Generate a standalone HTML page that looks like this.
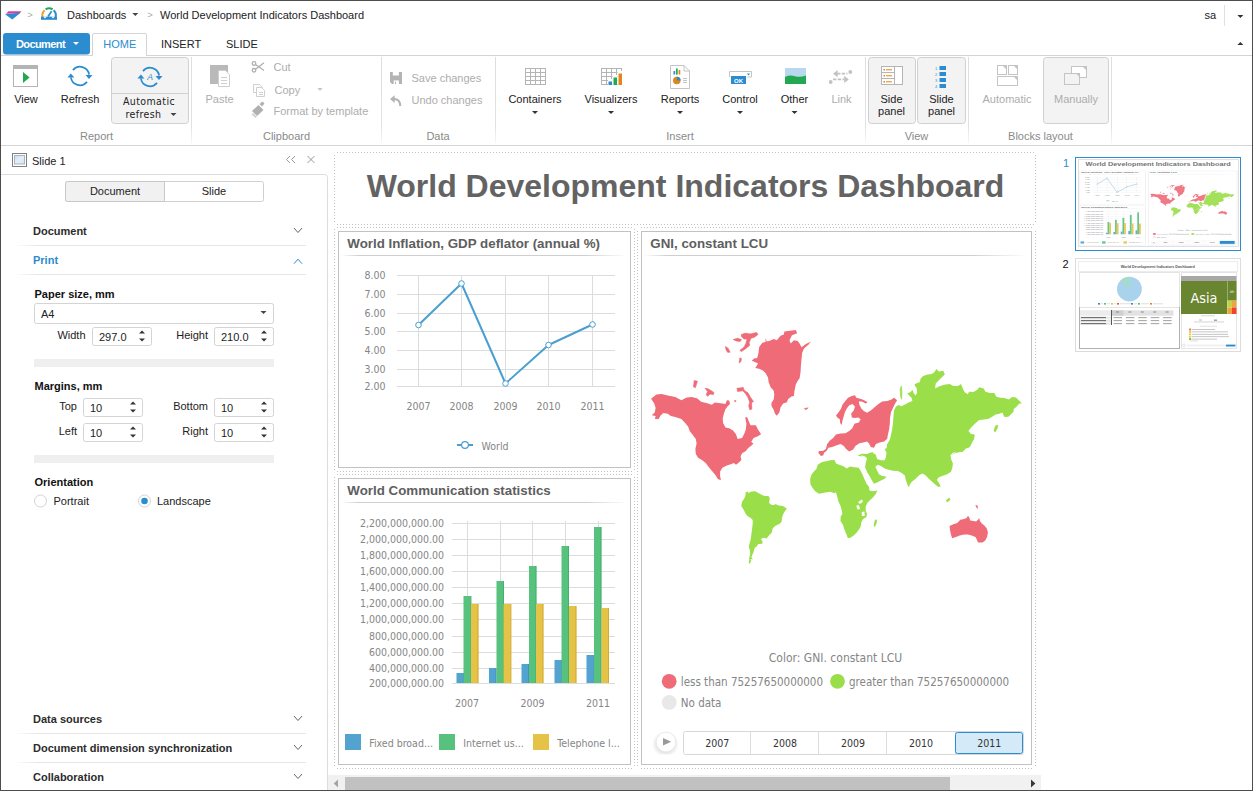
<!DOCTYPE html>
<html lang="en"><head><meta charset="utf-8"><title>World Development Indicators Dashboard</title>
<style>
html,body{margin:0;padding:0;background:#fff;overflow:hidden}
body{width:1253px;height:791px;font-family:"Liberation Sans",Arial,sans-serif;font-size:11px}
svg{display:block;position:absolute;left:0;top:0}
text{font-family:"Liberation Sans",Arial,sans-serif;white-space:pre}
text.t{font-family:"DejaVu Sans Condensed","DejaVu Sans","Liberation Sans",sans-serif;font-stretch:condensed}
</style></head><body>
<svg width="1253" height="791" viewBox="0 0 1253 791">
<path d="M8.5 11.2 L21.5 11.2 L19.5 13.2 L6 13.8 Z" fill="#e5389a"/>
<path d="M5 14.2 L20.8 12.6 L12.3 19.6 Z" fill="#2b8ccf"/>
<text x="27.5" y="17.8" font-size="9" fill="#a8a8a8" >&gt;</text>
<g fill="none" stroke-width="2"><path d="M42.6 17 A6.8 6.8 0 0 1 44.6 10.2" stroke="#f0a030"/><path d="M45.6 9.4 A6.8 6.8 0 0 1 52.6 9.4" stroke="#21a851"/><path d="M53.6 10.2 A6.8 6.8 0 0 1 55.6 17" stroke="#2b8ccf"/><path d="M48 16.5 L51.6 11.2" stroke="#2b8ccf" stroke-width="1.7"/></g>
<path d="M41 16.6 h16 v3.2 h-16 z" fill="#2b8ccf"/>
<path d="M43.2 16.4 h3.6 l-1.8 2 z M51.2 16.4 h3.6 l-1.8 2 z" fill="#fff"/>
<text x="67" y="18.5" font-size="11" fill="#222" >Dashboards</text>
<path d="M132.3 13 h6 l-3 3 z" fill="#444"/>
<text x="147.6" y="17.8" font-size="9" fill="#a8a8a8" >&gt;</text>
<text x="160" y="18.5" font-size="11" fill="#222" >World Development Indicators Dashboard</text>
<text x="1204.5" y="19" font-size="11" fill="#222" >sa</text>
<rect x="1224" y="5" width="1" height="21" fill="#e0e0e0" />
<path d="M1237.4 15 h6 l-3 3 z" fill="#333"/>
<path d="M1237.4 45 h6 l-3 -3 z" fill="#333"/>
<rect x="1" y="55" width="1251" height="1" fill="#d4d4d4" />
<rect x="3" y="33" width="87" height="21.5" fill="#2b8ccf" rx="3" />
<text x="16" y="47.5" font-size="11" fill="#fff" font-weight="bold" letter-spacing="-0.6">Document</text>
<path d="M73 42 h6 l-3 3 z" fill="#fff"/>
<path d="M92.5 56 V35 a1.5 1.5 0 0 1 1.5 -1.5 H145 a1.5 1.5 0 0 1 1.5 1.5 V56" fill="#fff" stroke="#d4d4d4"/>
<rect x="93" y="55" width="53" height="1" fill="#fff" />
<text x="103.3" y="48" font-size="11" fill="#2b8ccf" >HOME</text>
<text x="161" y="48" font-size="11" fill="#222" >INSERT</text>
<text x="226" y="48" font-size="11" fill="#222" >SLIDE</text>
<rect x="1" y="145" width="1251" height="1" fill="#d4d4d4" />
<defs><linearGradient id="sepg" x1="0" y1="0" x2="0" y2="1"><stop offset="0" stop-color="#dedede"/><stop offset="0.8" stop-color="#e2e2e2"/><stop offset="1" stop-color="#f6f6f6"/></linearGradient><linearGradient id="ulg" x1="0" y1="0" x2="1" y2="0"><stop offset="0" stop-color="#d0d0d0" stop-opacity="0"/><stop offset="0.06" stop-color="#cfcfcf"/><stop offset="0.85" stop-color="#cfcfcf"/><stop offset="1" stop-color="#d0d0d0" stop-opacity="0"/></linearGradient></defs>
<rect x="191" y="57" width="1" height="86" fill="url(#sepg)"/>
<rect x="381" y="57" width="1" height="86" fill="url(#sepg)"/>
<rect x="495" y="57" width="1" height="86" fill="url(#sepg)"/>
<rect x="865" y="57" width="1" height="86" fill="url(#sepg)"/>
<rect x="968" y="57" width="1" height="86" fill="url(#sepg)"/>
<rect x="1111" y="57" width="1" height="86" fill="url(#sepg)"/>
<rect x="13.5" y="65.5" width="24" height="21" fill="#fff" stroke="#b4b4b4" stroke-width="1" />
<rect x="13" y="65" width="25" height="4" fill="#b4b4b4" />
<path d="M23 72 L29.6 77.5 L23 83 Z" fill="#21a851"/>
<text x="26" y="102.5" font-size="11" fill="#222" text-anchor="middle" >View</text>
<g fill="none" stroke="#2b8ccf" stroke-width="1.7"><path d="M72.95 70.09 A9.2 9.2 0 0 1 89.11 74.72"/><path d="M87.05 81.91 A9.2 9.2 0 0 1 70.89 77.28"/></g>
<path d="M85.5 75.1 h7 l-3.5 4 z" fill="#2b8ccf"/>
<path d="M67.4 77.5 h7 l-3.5 -4 z" fill="#2b8ccf"/>
<text x="80" y="102.5" font-size="11" fill="#222" text-anchor="middle" >Refresh</text>
<rect x="111.5" y="57.5" width="77" height="66" fill="#f3f3f3" stroke="#d0d0d0" stroke-width="1" rx="3" />
<rect x="112" y="93" width="76" height="1" fill="#d0d0d0" />
<g fill="none" stroke="#2b8ccf" stroke-width="1.7"><path d="M142.95 71.09 A9.2 9.2 0 0 1 159.11 75.72"/><path d="M157.05 82.91 A9.2 9.2 0 0 1 140.89 78.28"/></g>
<path d="M155.5 76.1 h7 l-3.5 4 z" fill="#2b8ccf"/>
<path d="M137.4 78.5 h7 l-3.5 -4 z" fill="#2b8ccf"/>
<text x="150" y="80" font-size="8.5" fill="#2b8ccf" text-anchor="middle" font-style="italic">A</text>
<text x="149" y="105" font-size="10.5" fill="#222" text-anchor="middle" class="t" letter-spacing="0.4">Automatic</text>
<text x="143.5" y="117.5" font-size="10.5" fill="#222" text-anchor="middle" class="t" letter-spacing="0.4">refresh</text>
<path d="M170.5 113 h6 l-3 3 z" fill="#444"/>
<text x="96.5" y="139.5" font-size="11" fill="#8a8a8a" text-anchor="middle" >Report</text>
<rect x="210" y="65" width="18" height="19" fill="#b9b9b9" />
<path d="M218.5 70.5 h7 l4 4 v12 h-11 z" fill="#fff" stroke="#cfcfcf"/>
<rect x="221" y="77" width="6" height="1" fill="#cfcfcf" />
<rect x="221" y="80" width="6" height="1" fill="#cfcfcf" />
<rect x="221" y="83" width="6" height="1" fill="#cfcfcf" />
<text x="219.5" y="102.5" font-size="11" fill="#adadad" text-anchor="middle" >Paste</text>
<g fill="none" stroke="#b0b0b0" stroke-width="1.3"><circle cx="254" cy="63.5" r="1.8"/><circle cx="254" cy="70.3" r="1.8"/><path d="M255.5 64.5 L264 70.5 M255.5 69.3 L264 62.8"/></g>
<text x="273.5" y="71" font-size="11" fill="#adadad" >Cut</text>
<g fill="#fff" stroke="#cfcfcf"><path d="M253.5 84.5 h6 l3 3 v5 h-9 z"/><path d="M256.5 87.5 h5 l3 3 v6 h-8 z"/></g>
<rect x="259" y="92" width="4" height="1" fill="#cfcfcf" />
<rect x="259" y="94" width="4" height="1" fill="#cfcfcf" />
<text x="274.5" y="94" font-size="11" fill="#adadad" >Copy</text>
<path d="M317.5 88 h5 l-2.5 3 z" fill="#c4c4c4"/>
<path d="M252 111 l6.5 -6 l5 5 l-6.5 6 z" fill="#b0b0b0"/><path d="M259.5 104 l3 -2.5 l2 2 l-2.5 3 z" fill="#b0b0b0"/><path d="M253 113 l4 4 l-1.5 1 l-4 -3.5z" fill="#d0d0d0"/>
<text x="273.5" y="115" font-size="11" fill="#adadad" >Format by template</text>
<text x="286.5" y="139.5" font-size="11" fill="#8a8a8a" text-anchor="middle" >Clipboard</text>
<path d="M390 72 h12 v12 h-10 l-2 -2 z" fill="#b4b4b4"/>
<rect x="392.8" y="72" width="6.1" height="3.5" fill="#fff" />
<rect x="393.7" y="80.4" width="5.2" height="3.6" fill="#fff" />
<rect x="395" y="81.6" width="1" height="2.4" fill="#b4b4b4" />
<text x="411.5" y="81.5" font-size="11" fill="#adadad" >Save changes</text>
<path d="M390 99 L394.7 95.2 V102.9 Z" fill="#b4b4b4"/><path d="M394 99 Q400.2 99 400.2 106" fill="none" stroke="#b4b4b4" stroke-width="2"/>
<text x="411.5" y="104" font-size="11" fill="#adadad" >Undo changes</text>
<text x="438" y="139.5" font-size="11" fill="#8a8a8a" text-anchor="middle" >Data</text>
<rect x="525" y="68" width="1" height="17" fill="#b4b4b4" />
<rect x="530" y="68" width="1" height="17" fill="#b4b4b4" />
<rect x="535" y="68" width="1" height="17" fill="#b4b4b4" />
<rect x="540" y="68" width="1" height="17" fill="#b4b4b4" />
<rect x="545" y="68" width="1" height="17" fill="#b4b4b4" />
<rect x="525" y="68" width="21" height="1" fill="#b4b4b4" />
<rect x="525" y="72" width="21" height="1" fill="#b4b4b4" />
<rect x="525" y="76" width="21" height="1" fill="#b4b4b4" />
<rect x="525" y="80" width="21" height="1" fill="#b4b4b4" />
<rect x="525" y="84" width="21" height="1" fill="#b4b4b4" />
<text x="535" y="102.5" font-size="11" fill="#222" text-anchor="middle" >Containers</text>
<path d="M532 111 h6 l-3 3 z" fill="#333"/>
<rect x="601" y="68" width="1" height="17" fill="#b4b4b4" />
<rect x="606" y="68" width="1" height="17" fill="#b4b4b4" />
<rect x="611" y="68" width="1" height="17" fill="#b4b4b4" />
<rect x="616" y="68" width="1" height="17" fill="#b4b4b4" />
<rect x="621" y="68" width="1" height="17" fill="#b4b4b4" />
<rect x="601" y="68" width="21" height="1" fill="#b4b4b4" />
<rect x="601" y="72" width="21" height="1" fill="#b4b4b4" />
<rect x="601" y="76" width="21" height="1" fill="#b4b4b4" />
<rect x="601" y="80" width="21" height="1" fill="#b4b4b4" />
<rect x="601" y="84" width="21" height="1" fill="#b4b4b4" />
<rect x="608" y="79" width="4.5" height="6" fill="#fff" />
<rect x="608.5" y="81.5" width="3.5" height="3.5" fill="#2b8ccf" />
<rect x="612.5" y="75" width="4.5" height="10" fill="#fff" />
<rect x="613.5" y="77.5" width="3.5" height="7.5" fill="#21a851" />
<rect x="617.5" y="71" width="5" height="14" fill="#fff" />
<rect x="618.5" y="73.5" width="3.5" height="11.5" fill="#e0861a" />
<text x="611" y="102.5" font-size="11" fill="#222" text-anchor="middle" >Visualizers</text>
<path d="M608 111 h6 l-3 3 z" fill="#333"/>
<path d="M670.5 65.5 h13.5 l5.5 5.5 v17.5 h-19 z" fill="#fff" stroke="#c4c4c4"/><path d="M684 65.5 v5.5 h5.5" fill="none" stroke="#c4c4c4"/>
<rect x="673.5" y="71" width="1.7" height="3.5" fill="#2b8ccf" />
<rect x="676" y="68.5" width="1.7" height="6" fill="#21a851" />
<rect x="678.6" y="70" width="1.7" height="4.5" fill="#e0861a" />
<circle cx="676.8" cy="80.5" r="3.8" fill="#e0861a"/><path d="M676.8 80.5 v-3.8 a3.8 3.8 0 0 1 3.8 3.8 z" fill="#2b8ccf"/>
<rect x="683" y="78" width="4" height="1" fill="#c4c4c4" />
<rect x="683" y="80" width="4" height="1" fill="#c4c4c4" />
<rect x="683" y="82" width="4" height="1" fill="#c4c4c4" />
<text x="680" y="102.5" font-size="11" fill="#222" text-anchor="middle" >Reports</text>
<path d="M677 111 h6 l-3 3 z" fill="#333"/>
<path d="M729.5 77 v-5.5 h22 v5.5 h-4" fill="none" stroke="#c4c4c4"/>
<rect x="731" y="76" width="15" height="8" fill="#2b8ccf" />
<text x="738.5" y="82.5" font-size="6" fill="#fff" text-anchor="middle" font-weight="bold" >OK</text>
<path d="M747 73.5 h3 l-1.5 2 z" fill="#2b8ccf"/>
<text x="740" y="102.5" font-size="11" fill="#222" text-anchor="middle" >Control</text>
<path d="M737 111 h6 l-3 3 z" fill="#333"/>
<rect x="785" y="68" width="21" height="9" fill="#b9d8ee" />
<path d="M785 77 q5 -2.5 10 -0.8 q5 1.6 11 -0.8 v8.6 h-21 z" fill="#21a851"/>
<text x="794.5" y="102.5" font-size="11" fill="#222" text-anchor="middle" >Other</text>
<path d="M791.5 111 h6 l-3 3 z" fill="#333"/>
<g fill="#c2c2c2"><circle cx="830.7" cy="82" r="1.9"/><circle cx="850.3" cy="72" r="1.9"/></g><g stroke="#c2c2c2" stroke-width="1.8" fill="none" stroke-dasharray="3.4 1.3"><path d="M837 73.7 h10.5"/><path d="M833 79.4 h11"/></g><path d="M833 73.7 l4.6 -3.6 v7.2 z M848.8 79.4 l-4.6 -3.6 v7.2 z" fill="#c2c2c2"/>
<text x="841.5" y="102.5" font-size="11" fill="#adadad" text-anchor="middle" >Link</text>
<text x="680" y="139.5" font-size="11" fill="#8a8a8a" text-anchor="middle" >Insert</text>
<rect x="868.5" y="57.5" width="47" height="66" fill="#f3f3f3" stroke="#d0d0d0" stroke-width="1" rx="3" />
<rect x="917.5" y="57.5" width="48" height="66" fill="#f3f3f3" stroke="#d0d0d0" stroke-width="1" rx="3" />
<rect x="881.5" y="66.5" width="21" height="18" fill="#fff" stroke="#b4b4b4" stroke-width="1" />
<rect x="894" y="67" width="1" height="17" fill="#b4b4b4" />
<rect x="882" y="72" width="12" height="1" fill="#b4b4b4" />
<rect x="882" y="78" width="12" height="1" fill="#b4b4b4" />
<rect x="883.5" y="69" width="1.5" height="1.5" fill="#e0861a" />
<rect x="886" y="69.3" width="6" height="1" fill="#e0861a" />
<rect x="883.5" y="75" width="1.5" height="1.5" fill="#e0861a" />
<rect x="886" y="75.3" width="6" height="1" fill="#e0861a" />
<rect x="883.5" y="81" width="1.5" height="1.5" fill="#e0861a" />
<rect x="886" y="81.3" width="6" height="1" fill="#e0861a" />
<text x="891.5" y="102.5" font-size="11" fill="#222" text-anchor="middle" >Side</text>
<text x="891.5" y="114.5" font-size="11" fill="#222" text-anchor="middle" >panel</text>
<rect x="939.5" y="66" width="6.5" height="4" fill="#2b8ccf" />
<text x="936" y="70" font-size="4" fill="#2b8ccf" text-anchor="middle" >1</text>
<rect x="939.5" y="72" width="6.5" height="4" fill="#2b8ccf" />
<text x="936" y="76" font-size="4" fill="#2b8ccf" text-anchor="middle" >2</text>
<rect x="939.5" y="78" width="6.5" height="4" fill="#2b8ccf" />
<text x="936" y="82" font-size="4" fill="#2b8ccf" text-anchor="middle" >3</text>
<rect x="939.5" y="84" width="6.5" height="4" fill="#2b8ccf" />
<text x="936" y="88" font-size="4" fill="#2b8ccf" text-anchor="middle" >4</text>
<text x="941.5" y="102.5" font-size="11" fill="#222" text-anchor="middle" >Slide</text>
<text x="941.5" y="114.5" font-size="11" fill="#222" text-anchor="middle" >panel</text>
<text x="916.5" y="139.5" font-size="11" fill="#8a8a8a" text-anchor="middle" >View</text>
<rect x="997.5" y="65.5" width="9" height="9" fill="#fff" stroke="#c4c4c4" stroke-width="1" />
<path d="M1002.5 65.5 h4 v4 z" fill="#c4c4c4"/>
<rect x="1008.5" y="65.5" width="9" height="9" fill="#fff" stroke="#c4c4c4" stroke-width="1" />
<path d="M1013.5 65.5 h4 v4 z" fill="#c4c4c4"/>
<rect x="997.5" y="76.5" width="20" height="9" fill="#fff" stroke="#c4c4c4" stroke-width="1" />
<path d="M1013.5 76.5 h4 v4 z" fill="#c4c4c4"/>
<text x="1007" y="102.5" font-size="11" fill="#adadad" text-anchor="middle" >Automatic</text>
<rect x="1043.5" y="57.5" width="65" height="66" fill="#f3f3f3" stroke="#d0d0d0" stroke-width="1" rx="3" />
<rect x="1071.5" y="66.5" width="15" height="11" fill="#fff" stroke="#c4c4c4" stroke-width="1" />
<path d="M1082.5 66.5 h4 v4 z" fill="#c4c4c4"/>
<rect x="1064.5" y="73.5" width="15" height="11" fill="#f3f3f3" stroke="#c4c4c4"/><path d="M1076 73.5 h4 v4 z" fill="#c4c4c4"/>
<text x="1076" y="102.5" font-size="11" fill="#adadad" text-anchor="middle" >Manually</text>
<text x="1040.5" y="139.5" font-size="11" fill="#8a8a8a" text-anchor="middle" >Blocks layout</text>
<rect x="12.5" y="153.5" width="14" height="13" fill="#fff" stroke="#808080" stroke-width="1" />
<defs><linearGradient id="slg" x1="0" y1="0" x2="1" y2="1"><stop offset="0" stop-color="#c6dcf0"/><stop offset="0.5" stop-color="#e4eff9"/><stop offset="1" stop-color="#cfe2f3"/></linearGradient></defs>
<rect x="14.5" y="155.5" width="10" height="8.5" fill="url(#slg)" stroke="#a8b4c0" stroke-width="1" />
<text x="32" y="165" font-size="11" fill="#222" >Slide 1</text>
<g fill="none" stroke="#9a9a9a" stroke-width="1"><path d="M290 156 l-3.5 3.5 l3.5 3.5 M295 156 l-3.5 3.5 l3.5 3.5"/><path d="M307.5 156 l7 7 M314.5 156 l-7 7"/></g>
<path d="M1 174.5 H324.5 a3 3 0 0 1 3 3 V790" fill="none" stroke="#dcdcdc"/>
<rect x="65.5" y="181.5" width="198" height="20" fill="#fff" stroke="#d0d0d0" stroke-width="1" rx="2" />
<path d="M67.5 181.5 H164.5 V201.5 H67.5 a2 2 0 0 1 -2 -2 V183.5 a2 2 0 0 1 2 -2 z" fill="#f1f1f1" stroke="#c8c8c8"/>
<text x="115" y="195" font-size="11" fill="#222" text-anchor="middle" >Document</text>
<text x="214" y="195" font-size="11" fill="#222" text-anchor="middle" >Slide</text>
<defs><linearGradient id="secl" x1="0" y1="0" x2="1" y2="0"><stop offset="0" stop-color="#e6e6e6" stop-opacity="0"/><stop offset="0.08" stop-color="#e6e6e6"/><stop offset="1" stop-color="#e6e6e6"/></linearGradient></defs>
<text x="33" y="234.5" font-size="11" fill="#2c2c2c" font-weight="bold" >Document</text>
<path d="M294 228 l4 4.5 l4 -4.5" fill="none" stroke="#666" stroke-width="1"/>
<rect x="14" y="245" width="292" height="1" fill="url(#secl)"/>
<text x="33" y="263.5" font-size="11" fill="#2b8ccf" font-weight="bold" >Print</text>
<path d="M294 263.7 l4 -4.5 l4 4.5" fill="none" stroke="#2b8ccf" stroke-width="1"/>
<rect x="14" y="274" width="292" height="1" fill="url(#secl)"/>
<text x="34.5" y="298" font-size="11" fill="#111" font-weight="bold" >Paper size, mm</text>
<rect x="34.5" y="303.5" width="239" height="20" fill="#fff" stroke="#d4d4d4" stroke-width="1" rx="2" />
<text x="41" y="317.5" font-size="11" fill="#222" >A4</text>
<path d="M260.5 311 h6 l-3 3 z" fill="#444"/>
<text x="85.5" y="339" font-size="11" fill="#222" text-anchor="end" >Width</text>
<rect x="92.5" y="327.5" width="59" height="18" fill="#fff" stroke="#d4d4d4" stroke-width="1" rx="2" />
<text x="99" y="340.5" font-size="11" fill="#222" >297.0</text>
<path d="M139 333.5 h6 l-3 -3 z" fill="#333"/>
<path d="M139 338.5 h6 l-3 3 z" fill="#333"/>
<text x="208" y="339" font-size="11" fill="#222" text-anchor="end" >Height</text>
<rect x="214.5" y="327.5" width="59" height="18" fill="#fff" stroke="#d4d4d4" stroke-width="1" rx="2" />
<text x="221" y="340.5" font-size="11" fill="#222" >210.0</text>
<path d="M261 333.5 h6 l-3 -3 z" fill="#333"/>
<path d="M261 338.5 h6 l-3 3 z" fill="#333"/>
<rect x="34" y="359" width="240" height="8" fill="#efefef" />
<text x="34.5" y="390" font-size="11" fill="#111" font-weight="bold" >Margins, mm</text>
<text x="77" y="410" font-size="11" fill="#222" text-anchor="end" >Top</text>
<rect x="83.5" y="398.5" width="59" height="18" fill="#fff" stroke="#d4d4d4" stroke-width="1" rx="2" />
<text x="90" y="411.5" font-size="11" fill="#222" >10</text>
<path d="M130 404.5 h6 l-3 -3 z" fill="#333"/>
<path d="M130 409.5 h6 l-3 3 z" fill="#333"/>
<text x="208" y="410" font-size="11" fill="#222" text-anchor="end" >Bottom</text>
<rect x="214.5" y="398.5" width="59" height="18" fill="#fff" stroke="#d4d4d4" stroke-width="1" rx="2" />
<text x="221" y="411.5" font-size="11" fill="#222" >10</text>
<path d="M261 404.5 h6 l-3 -3 z" fill="#333"/>
<path d="M261 409.5 h6 l-3 3 z" fill="#333"/>
<text x="77" y="435" font-size="11" fill="#222" text-anchor="end" >Left</text>
<rect x="83.5" y="423.5" width="59" height="18" fill="#fff" stroke="#d4d4d4" stroke-width="1" rx="2" />
<text x="90" y="436.5" font-size="11" fill="#222" >10</text>
<path d="M130 429.5 h6 l-3 -3 z" fill="#333"/>
<path d="M130 434.5 h6 l-3 3 z" fill="#333"/>
<text x="208" y="435" font-size="11" fill="#222" text-anchor="end" >Right</text>
<rect x="214.5" y="423.5" width="59" height="18" fill="#fff" stroke="#d4d4d4" stroke-width="1" rx="2" />
<text x="221" y="436.5" font-size="11" fill="#222" >10</text>
<path d="M261 429.5 h6 l-3 -3 z" fill="#333"/>
<path d="M261 434.5 h6 l-3 3 z" fill="#333"/>
<rect x="34" y="455" width="240" height="8" fill="#efefef" />
<text x="34.5" y="485.5" font-size="11" fill="#111" font-weight="bold" >Orientation</text>
<circle cx="40.5" cy="501" r="6" fill="#fff" stroke="#d4d4d4"/>
<text x="53.5" y="505" font-size="11" fill="#222" >Portrait</text>
<circle cx="144.5" cy="501" r="6" fill="#fff" stroke="#d4d4d4"/><circle cx="144.5" cy="501" r="3.3" fill="#2b8ccf"/>
<text x="157" y="505" font-size="11" fill="#222" >Landscape</text>
<text x="33" y="722.5" font-size="11" fill="#2c2c2c" font-weight="bold" >Data sources</text>
<path d="M294 716 l4 4.5 l4 -4.5" fill="none" stroke="#666" stroke-width="1"/>
<rect x="14" y="733" width="292" height="1" fill="url(#secl)"/>
<text x="33" y="751.5" font-size="11" fill="#2c2c2c" font-weight="bold" >Document dimension synchronization</text>
<path d="M294 745 l4 4.5 l4 -4.5" fill="none" stroke="#666" stroke-width="1"/>
<rect x="14" y="762" width="292" height="1" fill="url(#secl)"/>
<text x="33" y="780.5" font-size="11" fill="#2c2c2c" font-weight="bold" >Collaboration</text>
<path d="M294 774 l4 4.5 l4 -4.5" fill="none" stroke="#666" stroke-width="1"/>
<line x1="337" y1="152.5" x2="1034" y2="152.5" stroke="#c2c2c2" stroke-dasharray="1 2" shape-rendering="crispEdges"/>
<line x1="334.5" y1="155" x2="334.5" y2="223" stroke="#c2c2c2" stroke-dasharray="1 2" shape-rendering="crispEdges"/>
<line x1="1035.5" y1="155" x2="1035.5" y2="223" stroke="#c2c2c2" stroke-dasharray="1 2" shape-rendering="crispEdges"/>
<line x1="337" y1="224.5" x2="1034" y2="224.5" stroke="#c2c2c2" stroke-dasharray="1 2" shape-rendering="crispEdges"/>
<line x1="337" y1="227.5" x2="632" y2="227.5" stroke="#c2c2c2" stroke-dasharray="1 2" shape-rendering="crispEdges"/>
<line x1="641" y1="227.5" x2="1034" y2="227.5" stroke="#c2c2c2" stroke-dasharray="1 2" shape-rendering="crispEdges"/>
<line x1="334.5" y1="229" x2="334.5" y2="470" stroke="#c2c2c2" stroke-dasharray="1 2" shape-rendering="crispEdges"/>
<line x1="334.5" y1="477" x2="334.5" y2="766" stroke="#c2c2c2" stroke-dasharray="1 2" shape-rendering="crispEdges"/>
<line x1="634.5" y1="229" x2="634.5" y2="470" stroke="#c2c2c2" stroke-dasharray="1 2" shape-rendering="crispEdges"/>
<line x1="634.5" y1="477" x2="634.5" y2="766" stroke="#c2c2c2" stroke-dasharray="1 2" shape-rendering="crispEdges"/>
<line x1="637.5" y1="231" x2="637.5" y2="766" stroke="#c2c2c2" stroke-dasharray="1 2" shape-rendering="crispEdges"/>
<line x1="1035.5" y1="231" x2="1035.5" y2="766" stroke="#c2c2c2" stroke-dasharray="1 2" shape-rendering="crispEdges"/>
<line x1="337" y1="471.5" x2="632" y2="471.5" stroke="#c2c2c2" stroke-dasharray="1 2" shape-rendering="crispEdges"/>
<line x1="337" y1="474.5" x2="632" y2="474.5" stroke="#c2c2c2" stroke-dasharray="1 2" shape-rendering="crispEdges"/>
<line x1="337" y1="768.5" x2="632" y2="768.5" stroke="#c2c2c2" stroke-dasharray="1 2" shape-rendering="crispEdges"/>
<line x1="641" y1="768.5" x2="1034" y2="768.5" stroke="#c2c2c2" stroke-dasharray="1 2" shape-rendering="crispEdges"/>
<g id="slide">
<text x="685.5" y="197.4" font-size="32" fill="#636363" text-anchor="middle" font-weight="bold" >World Development Indicators Dashboard</text>
<rect x="338.5" y="231.5" width="292" height="236" fill="#fff" stroke="#c2c2c2" stroke-width="1" />
<text x="347.3" y="247.7" font-size="13.33" fill="#5e5e5e" font-weight="bold" >World Inflation, GDP deflator (annual %)</text>
<rect x="341" y="255" width="287" height="1" fill="url(#ulg)"/>
<rect x="397" y="275" width="218" height="1" fill="#dcdcdc" />
<rect x="397" y="294" width="218" height="1" fill="#dcdcdc" />
<rect x="397" y="313" width="218" height="1" fill="#dcdcdc" />
<rect x="397" y="331" width="218" height="1" fill="#dcdcdc" />
<rect x="397" y="350" width="218" height="1" fill="#dcdcdc" />
<rect x="397" y="369" width="218" height="1" fill="#dcdcdc" />
<rect x="397" y="386" width="218" height="1" fill="#dcdcdc" />
<rect x="418" y="275" width="1" height="111" fill="#dcdcdc" />
<rect x="461" y="275" width="1" height="111" fill="#dcdcdc" />
<rect x="505" y="275" width="1" height="111" fill="#dcdcdc" />
<rect x="548" y="275" width="1" height="111" fill="#dcdcdc" />
<rect x="592" y="275" width="1" height="111" fill="#dcdcdc" />
<text x="385.5" y="279" font-size="10.5" fill="#858585" text-anchor="end" class="t" >8.00</text>
<text x="385.5" y="298" font-size="10.5" fill="#858585" text-anchor="end" class="t" >7.00</text>
<text x="385.5" y="317" font-size="10.5" fill="#858585" text-anchor="end" class="t" >6.00</text>
<text x="385.5" y="335" font-size="10.5" fill="#858585" text-anchor="end" class="t" >5.00</text>
<text x="385.5" y="354" font-size="10.5" fill="#858585" text-anchor="end" class="t" >4.00</text>
<text x="385.5" y="373" font-size="10.5" fill="#858585" text-anchor="end" class="t" >3.00</text>
<text x="385.5" y="390" font-size="10.5" fill="#858585" text-anchor="end" class="t" >2.00</text>
<polyline points="418.5,325 461.5,283.5 505.5,383.5 548.5,345 592.5,324.5" fill="none" stroke="#4a9fd0" stroke-width="2" stroke-linejoin="round"/>
<circle cx="418.5" cy="325" r="2.8" fill="#fff" stroke="#4a9fd0" stroke-width="1"/>
<circle cx="461.5" cy="283.5" r="2.8" fill="#fff" stroke="#4a9fd0" stroke-width="1"/>
<circle cx="505.5" cy="383.5" r="2.8" fill="#fff" stroke="#4a9fd0" stroke-width="1"/>
<circle cx="548.5" cy="345" r="2.8" fill="#fff" stroke="#4a9fd0" stroke-width="1"/>
<circle cx="592.5" cy="324.5" r="2.8" fill="#fff" stroke="#4a9fd0" stroke-width="1"/>
<text x="418.5" y="410" font-size="10.5" fill="#858585" text-anchor="middle" class="t" >2007</text>
<text x="461.5" y="410" font-size="10.5" fill="#858585" text-anchor="middle" class="t" >2008</text>
<text x="505.5" y="410" font-size="10.5" fill="#858585" text-anchor="middle" class="t" >2009</text>
<text x="548.5" y="410" font-size="10.5" fill="#858585" text-anchor="middle" class="t" >2010</text>
<text x="592.5" y="410" font-size="10.5" fill="#858585" text-anchor="middle" class="t" >2011</text>
<rect x="457" y="444" width="16" height="2" fill="#4a9fd0" />
<circle cx="465" cy="445" r="3.4" fill="#fff" stroke="#4a9fd0" stroke-width="1.2"/>
<text x="481.5" y="450" font-size="10.5" fill="#858585" class="t" >World</text>
<rect x="338.5" y="478.5" width="292" height="286" fill="#fff" stroke="#c2c2c2" stroke-width="1" />
<text x="347.3" y="494.7" font-size="13.33" fill="#5e5e5e" font-weight="bold" >World Communication statistics</text>
<rect x="341" y="502" width="287" height="1" fill="url(#ulg)"/>
<rect x="452" y="523" width="163" height="1" fill="#dcdcdc" />
<rect x="452" y="539" width="163" height="1" fill="#dcdcdc" />
<rect x="452" y="555" width="163" height="1" fill="#dcdcdc" />
<rect x="452" y="571" width="163" height="1" fill="#dcdcdc" />
<rect x="452" y="587" width="163" height="1" fill="#dcdcdc" />
<rect x="452" y="603" width="163" height="1" fill="#dcdcdc" />
<rect x="452" y="619" width="163" height="1" fill="#dcdcdc" />
<rect x="452" y="636" width="163" height="1" fill="#dcdcdc" />
<rect x="452" y="652" width="163" height="1" fill="#dcdcdc" />
<rect x="452" y="668" width="163" height="1" fill="#dcdcdc" />
<rect x="452" y="683" width="163" height="1" fill="#dcdcdc" />
<rect x="467" y="521" width="1" height="162" fill="#dcdcdc" />
<rect x="500" y="521" width="1" height="162" fill="#dcdcdc" />
<rect x="532" y="521" width="1" height="162" fill="#dcdcdc" />
<rect x="565" y="521" width="1" height="162" fill="#dcdcdc" />
<rect x="598" y="521" width="1" height="162" fill="#dcdcdc" />
<text x="444" y="527" font-size="10.5" fill="#858585" text-anchor="end" class="t" >2,200,000,000.00</text>
<text x="444" y="543" font-size="10.5" fill="#858585" text-anchor="end" class="t" >2,000,000,000.00</text>
<text x="444" y="559" font-size="10.5" fill="#858585" text-anchor="end" class="t" >1,800,000,000.00</text>
<text x="444" y="575" font-size="10.5" fill="#858585" text-anchor="end" class="t" >1,600,000,000.00</text>
<text x="444" y="591" font-size="10.5" fill="#858585" text-anchor="end" class="t" >1,400,000,000.00</text>
<text x="444" y="607" font-size="10.5" fill="#858585" text-anchor="end" class="t" >1,200,000,000.00</text>
<text x="444" y="623" font-size="10.5" fill="#858585" text-anchor="end" class="t" >1,000,000,000.00</text>
<text x="444" y="640" font-size="10.5" fill="#858585" text-anchor="end" class="t" >800,000,000.00</text>
<text x="444" y="656" font-size="10.5" fill="#858585" text-anchor="end" class="t" >600,000,000.00</text>
<text x="444" y="672" font-size="10.5" fill="#858585" text-anchor="end" class="t" >400,000,000.00</text>
<text x="444" y="687" font-size="10.5" fill="#858585" text-anchor="end" class="t" >200,000,000.00</text>
<rect x="456.5" y="673" width="7.4" height="10" fill="#52a3d0" />
<rect x="463" y="673" width="0.9" height="10" fill="#3f8fbd" />
<rect x="463.5" y="596" width="7.4" height="87" fill="#57c27e" />
<rect x="470.5" y="596" width="0.9" height="87" fill="#43ad6a" />
<rect x="471" y="604" width="7.4" height="79" fill="#e5c347" />
<rect x="477.5" y="604" width="0.9" height="79" fill="#d2a830" />
<rect x="489" y="668" width="7.4" height="15" fill="#52a3d0" />
<rect x="495.5" y="668" width="0.9" height="15" fill="#3f8fbd" />
<rect x="496.5" y="581" width="7.4" height="102" fill="#57c27e" />
<rect x="503" y="581" width="0.9" height="102" fill="#43ad6a" />
<rect x="503.5" y="604" width="7.4" height="79" fill="#e5c347" />
<rect x="510.5" y="604" width="0.9" height="79" fill="#d2a830" />
<rect x="521.5" y="664" width="7.4" height="19" fill="#52a3d0" />
<rect x="528" y="664" width="0.9" height="19" fill="#3f8fbd" />
<rect x="529" y="566" width="7.4" height="117" fill="#57c27e" />
<rect x="535.5" y="566" width="0.9" height="117" fill="#43ad6a" />
<rect x="536" y="604" width="7.4" height="79" fill="#e5c347" />
<rect x="542.5" y="604" width="0.9" height="79" fill="#d2a830" />
<rect x="554.5" y="660" width="7.4" height="23" fill="#52a3d0" />
<rect x="561" y="660" width="0.9" height="23" fill="#3f8fbd" />
<rect x="561.5" y="546" width="7.4" height="137" fill="#57c27e" />
<rect x="568" y="546" width="0.9" height="137" fill="#43ad6a" />
<rect x="569" y="606" width="7.4" height="77" fill="#e5c347" />
<rect x="575.5" y="606" width="0.9" height="77" fill="#d2a830" />
<rect x="586.5" y="655" width="7.4" height="28" fill="#52a3d0" />
<rect x="593.5" y="655" width="0.9" height="28" fill="#3f8fbd" />
<rect x="594" y="527" width="7.4" height="156" fill="#57c27e" />
<rect x="600.5" y="527" width="0.9" height="156" fill="#43ad6a" />
<rect x="601.5" y="608" width="7.4" height="75" fill="#e5c347" />
<rect x="608" y="608" width="0.9" height="75" fill="#d2a830" />
<text x="467" y="707" font-size="10.5" fill="#858585" text-anchor="middle" class="t" >2007</text>
<text x="532.5" y="707" font-size="10.5" fill="#858585" text-anchor="middle" class="t" >2009</text>
<text x="598" y="707" font-size="10.5" fill="#858585" text-anchor="middle" class="t" >2011</text>
<rect x="345" y="734" width="16" height="16" fill="#52a3d0" />
<text x="369.3" y="747" font-size="10.5" fill="#858585" class="t" >Fixed broad...</text>
<rect x="439" y="734" width="16" height="16" fill="#57c27e" />
<text x="463.3" y="747" font-size="10.5" fill="#858585" class="t" >Internet us...</text>
<rect x="533" y="734" width="16" height="16" fill="#e5c347" />
<text x="557.3" y="747" font-size="10.5" fill="#858585" class="t" >Telephone l...</text>
<rect x="641.5" y="231.5" width="390" height="533" fill="#fff" stroke="#c2c2c2" stroke-width="1" />
<text x="650.3" y="247.7" font-size="13.33" fill="#5e5e5e" font-weight="bold" >GNI, constant LCU</text>
<rect x="644" y="255" width="385" height="1" fill="url(#ulg)"/>
<text x="835.5" y="662" font-size="12" fill="#858585" text-anchor="middle" class="t" >Color: GNI. constant LCU</text>
<circle cx="669.2" cy="681.3" r="7.4" fill="#ee6b77"/>
<text x="680.8" y="686.3" font-size="11.5" fill="#858585" class="t" >less than 75257650000000</text>
<circle cx="837.5" cy="681.3" r="7.4" fill="#9ade4a"/>
<text x="849" y="686.3" font-size="11.5" fill="#858585" class="t" >greater than 75257650000000</text>
<circle cx="669.2" cy="702.4" r="7.4" fill="#e8e8e8"/>
<text x="680.8" y="707.3" font-size="11.5" fill="#858585" class="t" >No data</text>
<defs><radialGradient id="pbs" cx="0.5" cy="0.5" r="0.5"><stop offset="0.55" stop-color="#000" stop-opacity="0.13"/><stop offset="1" stop-color="#000" stop-opacity="0"/></radialGradient><clipPath id="pbc"><rect x="640" y="725" width="60" height="29.5"/></clipPath></defs>
<ellipse cx="665.5" cy="744" rx="13.5" ry="13" fill="url(#pbs)" clip-path="url(#pbc)"/>
<circle cx="666" cy="742" r="9.8" fill="#fff" stroke="#ebebeb"/>
<path d="M663 738 l8.2 3.8 l-8.2 3.8 z" fill="#9a9a9a"/>
<rect x="683.5" y="731.5" width="340" height="23" fill="#fff" stroke="#d8d8d8" stroke-width="1" rx="2" />
<rect x="750" y="732" width="1" height="22" fill="#dcdcdc" />
<rect x="818" y="732" width="1" height="22" fill="#dcdcdc" />
<rect x="886" y="732" width="1" height="22" fill="#dcdcdc" />
<rect x="955" y="732" width="1" height="22" fill="#dcdcdc" />
<rect x="955.5" y="732.5" width="67" height="21" fill="#d5eaf8" stroke="#2b8ccf" stroke-width="1" rx="2" />
<text x="717.2" y="747" font-size="10.5" fill="#333" text-anchor="middle" class="t" >2007</text>
<text x="784.9" y="747" font-size="10.5" fill="#333" text-anchor="middle" class="t" >2008</text>
<text x="852.9" y="747" font-size="10.5" fill="#333" text-anchor="middle" class="t" >2009</text>
<text x="921.05" y="747" font-size="10.5" fill="#333" text-anchor="middle" class="t" >2010</text>
<text x="989.35" y="747" font-size="10.5" fill="#333" text-anchor="middle" class="t" >2011</text>
<g id="worldmap">
<polygon points="784.4,331.4 795.8,330.1 797.1,333.3 792.0,335.2 789.5,340.2 790.7,343.4 793.9,340.2 797.7,340.9 799.6,343.4 801.5,347.2 805.9,344.0 811.0,341.5 808.4,344.7 804.0,348.4 802.1,352.9 801.5,359.2 800.9,365.5 800.6,371.8 799.6,378.2 797.7,380.7 795.8,384.5 794.5,390.8 793.9,395.9 791.4,396.5 788.2,399.0 786.9,402.2 783.2,403.4 780.6,407.2 779.4,412.3 776.8,415.7 774.9,413.6 773.7,409.8 771.5,406.0 771.5,402.8 773.7,399.6 774.3,394.6 773.7,390.8 770.5,387.0 768.6,381.9 768.0,377.5 765.5,373.1 762.9,370.6 759.1,368.7 755.3,368.0 758.1,363.6 756.0,362.4 751.8,360.7 754.1,358.6 757.2,357.9 758.5,352.9 759.1,347.2 762.3,342.8 765.5,342.1 765.7,337.7 766.7,341.5 769.2,340.9 773.7,339.0 776.8,340.2 780.6,335.8 783.8,334.5" fill="#ee6b77"/>
<polygon points="741.4,334.5 745.2,333.3 750.3,333.9 756.6,332.6 757.9,334.5 754.7,337.1 750.9,338.3 749.0,342.8 749.7,345.3 745.9,348.4 741.4,351.6 739.9,350.3 744.0,347.2 745.9,343.4 747.1,339.0 744.0,339.0 741.4,336.4" fill="#ee6b77" stroke="#ee6b77" stroke-width="0.7" stroke-linejoin="round"/>
<polygon points="733.2,339.6 737.6,338.3 741.4,339.6 740.2,341.5 736.4,340.9" fill="#ee6b77" stroke="#ee6b77" stroke-width="0.7" stroke-linejoin="round"/>
<polygon points="725.6,346.5 728.2,348.4 730.1,352.2 727.5,352.2 726.0,349.7" fill="#ee6b77" stroke="#ee6b77" stroke-width="0.7" stroke-linejoin="round"/>
<polygon points="739.9,357.9 741.4,358.6 740.8,361.7 739.2,363.0" fill="#ee6b77" stroke="#ee6b77" stroke-width="0.7" stroke-linejoin="round"/>
<polygon points="737.0,388.3 743.3,387.6 744.0,390.2 747.8,392.7 750.3,397.1 753.4,401.5 751.5,402.8 751.8,409.1 749.7,409.8 748.8,406.0 749.7,402.2 747.8,397.1 745.2,393.3 742.7,390.8 737.6,391.4" fill="#ee6b77" stroke="#ee6b77" stroke-width="0.7" stroke-linejoin="round"/>
<polygon points="694.2,380.6 697.4,381.2 695.4,387.6 693.5,386.9" fill="#ee6b77" stroke="#ee6b77" stroke-width="0.7" stroke-linejoin="round"/>
<polygon points="705.0,388.2 708.2,388.9 711.4,390.8 714.0,392.7 713.3,394.6 710.1,394.0 707.6,396.3 706.3,394.6 707.6,391.4" fill="#ee6b77" stroke="#ee6b77" stroke-width="0.7" stroke-linejoin="round"/>
<polygon points="734.7,400.6 735.9,400.6 735.9,401.6 734.7,401.6" fill="#ee6b77" stroke="#ee6b77" stroke-width="0.7" stroke-linejoin="round"/>
<polygon points="651.1,398.7 656.4,394.4 661.7,394.1 667.8,395.6 675.3,397.1 681.4,400.2 686.7,397.4 692.0,397.1 697.4,398.4 701.1,401.7 707.2,403.2 711.8,404.7 714.8,402.5 720.9,403.2 725.4,404.0 726.9,400.2 729.2,400.5 730.0,404.0 727.7,406.2 725.4,409.3 723.9,413.8 722.7,418.4 723.1,422.9 725.4,427.5 729.2,428.2 733.0,430.5 736.0,434.3 737.6,438.9 742.1,438.1 744.4,433.6 745.9,429.0 746.4,423.7 745.2,417.6 747.0,416.9 748.9,421.4 750.5,425.2 755.8,425.2 758.1,429.8 761.1,434.3 757.3,436.6 753.5,438.1 751.2,441.9 753.5,443.4 751.2,445.7 748.2,448.0 745.9,451.0 742.1,453.3 740.6,456.3 741.4,460.1 738.3,463.1 736.0,464.7 733.8,463.1 731.5,463.9 726.9,465.4 722.4,467.7 720.1,471.5 720.1,476.0 720.9,480.3 717.8,479.1 715.6,475.3 711.8,470.7 708.7,466.9 705.7,463.1 701.9,460.1 698.1,457.8 695.8,454.0 695.4,448.7 696.6,443.4 695.8,438.9 692.8,435.1 689.8,431.3 688.2,426.7 685.2,422.9 681.4,419.1 675.3,416.9 670.8,416.1 667.8,413.8 663.2,413.1 660.2,416.1 658.7,419.1 654.9,419.1 655.6,416.1 651.8,415.3 654.9,412.3 655.6,407.8 654.1,403.2" fill="#ee6b77"/>
<polygon points="745.7,492.2 747.6,491.6 748.3,492.9 751.4,491.6 755.2,491.2 758.4,492.9 761.5,494.8 764.7,496.0 768.5,496.0 769.8,498.5 769.1,503.0 771.7,504.9 774.2,504.9 775.5,503.9 778.6,505.5 783.0,506.1 786.8,508.4 784.9,511.2 783.0,514.4 782.0,518.1 781.5,521.9 779.2,524.1 775.5,525.7 772.7,528.3 771.7,532.7 769.1,535.2 766.6,538.4 763.4,537.7 760.9,539.0 762.6,541.5 762.2,543.8 758.4,544.1 756.5,546.6 754.6,547.9 753.7,551.6 752.1,555.4 751.4,557.3 753.0,559.2 750.2,559.2 751.2,560.5 749.9,563.7 748.7,563.0 749.2,560.5 749.2,558.0 750.2,554.2 749.9,550.4 748.9,546.6 749.5,543.4 750.8,539.0 751.4,533.9 752.1,528.9 752.7,523.8 752.7,520.0 750.8,518.1 747.6,516.2 745.7,513.7 743.8,509.9 741.3,506.1 742.0,501.7 743.8,499.2 745.4,496.0" fill="#9ade4a"/>
<polygon points="817.7,464.7 822.1,462.1 827.2,460.9 831.6,460.0 834.8,460.2 836.0,463.4 839.2,464.7 843.0,465.9 846.8,468.4 849.9,466.5 854.4,467.2 858.8,467.8 860.7,471.0 862.6,474.8 864.5,479.2 866.4,483.6 868.9,486.8 869.5,490.6 872.7,491.2 877.4,490.6 875.9,493.7 873.3,496.9 870.2,500.1 867.6,502.6 865.7,506.4 865.7,510.8 867.0,514.0 866.4,517.1 863.2,519.0 861.3,522.2 860.7,526.6 858.8,529.8 856.3,532.9 853.1,536.1 849.9,538.0 847.8,538.0 846.1,533.6 844.2,529.1 843.0,524.7 840.5,520.9 840.7,516.5 842.4,514.0 841.7,510.2 840.5,505.7 838.6,501.9 837.3,496.9 836.0,492.5 833.5,493.1 830.3,491.8 825.3,492.5 819.0,493.7 815.2,491.2 812.6,488.0 810.4,484.2 810.1,479.2 811.4,474.8 813.9,471.6 816.4,469.1" fill="#9ade4a"/>
<polygon points="858.2,501.9 861.9,499.4 863.0,501.3 861.3,503.2 859.4,503.8" fill="#fff"/>
<polygon points="856.3,505.7 858.8,505.1 860.1,508.9 857.5,509.5" fill="#fff"/>
<polygon points="861.7,512.1 864.5,511.4 864.7,515.9 861.9,515.9" fill="#fff"/>
<polygon points="875.6,520.3 876.7,519.9 875.9,524.1 874.6,526.6 874.3,524.7" fill="#9ade4a" stroke="#9ade4a" stroke-width="0.7" stroke-linejoin="round"/>
<polygon points="848.0,397.8 851.8,395.9 855.0,395.2 856.3,397.8 859.4,398.4 863.2,399.7 867.6,402.2 865.7,403.4 861.9,401.5 858.8,401.5 859.4,404.7 861.3,408.5 863.8,411.0 867.0,412.7 870.8,410.4 874.6,407.2 878.4,404.1 882.2,401.5 887.2,400.9 891.0,399.7 894.2,397.8 897.1,400.3 894.8,404.1 892.9,407.9 891.0,412.3 890.0,418.0 889.8,423.7 889.1,429.4 887.9,434.4 887.2,438.8 884.1,441.4 879.6,442.6 875.9,443.9 874.0,447.7 870.8,447.1 868.9,443.3 867.0,441.4 863.2,442.6 859.4,443.3 855.6,445.8 853.1,449.6 849.3,451.5 846.1,449.0 843.6,445.8 840.5,443.9 836.7,445.2 832.2,447.1 828.4,447.7 826.5,450.9 824.0,452.7 823.4,455.3 820.9,455.9 818.3,452.7 819.0,450.9 822.8,450.9 825.9,449.0 827.2,443.9 829.7,440.7 832.9,438.2 836.0,434.4 840.5,433.4 845.5,433.2 849.9,430.6 852.5,428.1 854.4,423.7 858.8,422.4 860.7,419.2 858.2,417.4 855.0,418.0 851.8,417.4 851.2,413.6 853.7,410.4 855.0,406.6 852.5,404.1 849.3,405.3 846.8,408.5 844.9,412.3 843.6,416.7 842.4,421.1 841.7,424.9 840.2,423.0 839.8,419.2 837.3,417.4 836.0,415.5 838.6,412.3 841.1,408.5 842.4,404.7 844.9,401.5" fill="#ee6b77"/>
<polygon points="804.4,408.5 808.2,407.9 805.7,409.8" fill="#ee6b77" stroke="#ee6b77" stroke-width="0.7" stroke-linejoin="round"/>
<polygon points="892.1,429.6 893.0,423.3 893.4,416.9 894.0,410.6 895.9,406.8 898.4,404.9 901.6,406.2 905.4,404.3 908.6,402.4 912.4,401.1 911.7,398.0 909.2,395.5 907.3,392.9 910.5,392.3 912.4,389.8 913.6,392.9 915.5,395.5 917.0,392.9 916.8,388.5 914.2,384.7 917.4,382.8 919.9,382.2 920.6,378.4 923.1,375.9 927.5,374.6 931.9,374.0 934.5,372.1 936.4,368.9 938.9,371.4 943.3,370.8 944.8,374.6 942.1,377.1 938.9,380.3 935.7,383.4 935.1,388.5 938.9,386.6 944.0,384.7 949.6,384.1 953.4,386.0 957.9,386.0 961.0,384.1 962.8,388.5 964.7,392.3 967.8,394.2 969.1,391.7 973.5,391.9 977.3,389.8 979.2,387.2 983.6,388.5 985.5,391.7 989.9,392.9 994.4,392.9 996.3,396.7 1000.7,397.7 1004.5,398.0 1008.9,399.5 1012.1,397.0 1015.9,397.4 1019.0,400.5 1021.9,403.3 1019.0,403.7 1016.5,406.8 1014.0,408.7 1013.3,411.9 1010.2,415.1 1008.3,416.7 1004.5,416.9 1003.2,414.4 1002.6,412.5 999.4,413.8 995.6,414.4 991.8,416.9 988.7,418.8 984.2,419.5 979.2,420.1 975.4,423.3 971.6,427.1 968.4,430.9 971.0,434.0 974.8,434.6 974.1,439.1 971.6,443.5 969.7,447.3 965.9,448.6 962.8,451.7 959.0,452.3 955.2,453.0 951.4,455.0 956.1,451.5 952.9,452.8 950.4,455.3 951.3,459.7 952.9,463.5 952.3,467.9 951.0,471.7 947.2,474.2 942.2,476.1 938.4,477.4 936.9,479.9 939.0,483.1 940.7,486.3 938.4,486.9 935.2,484.4 932.1,481.8 928.9,478.7 925.7,475.5 922.6,473.6 919.4,474.9 915.6,478.7 911.8,481.8 909.9,484.4 908.7,487.5 907.4,484.4 905.8,479.9 904.9,475.5 901.7,473.0 897.9,471.1 892.9,470.7 888.4,469.8 884.7,468.6 880.9,466.0 877.7,464.8 875.4,466.7 877.1,470.5 879.0,474.2 882.1,476.1 886.5,476.5 884.7,478.7 880.9,480.6 877.1,482.5 873.9,483.7 872.0,480.6 869.5,476.1 867.0,471.7 865.1,467.3 865.7,462.9 867.0,458.4 865.1,456.5 861.3,455.3 861.9,456.4 857.5,455.8 861.9,453.7 867.0,453.9 870.8,452.6 874.0,452.0 872.6,452.8 875.8,454.7 877.1,459.1 880.9,460.3 884.7,460.3 885.9,457.2 886.5,452.8 884.7,449.0 886.5,448.3 887.2,443.9 889.7,440.1 891.0,435.1" fill="#9ade4a"/>
<polygon points="900.1,389.4 901.4,386.0 901.9,392.9 901.6,399.2 900.7,396.7" fill="#9ade4a" stroke="#9ade4a" stroke-width="0.7" stroke-linejoin="round"/>
<polygon points="995.6,425.8 997.9,425.2 996.9,429.0 995.0,432.1 994.1,430.2" fill="#9ade4a" stroke="#9ade4a" stroke-width="0.7" stroke-linejoin="round"/>
<polygon points="946.0,500.8 949.1,498.0 950.0,499.5 947.9,501.8" fill="#9ade4a" stroke="#9ade4a" stroke-width="0.7" stroke-linejoin="round"/>
<polygon points="875.2,520.4 876.4,520.0 875.4,524.2 874.2,526.1" fill="#9ade4a" stroke="#9ade4a" stroke-width="0.7" stroke-linejoin="round"/>
<polygon points="949.6,526.1 953.4,524.2 957.2,523.0 960.3,519.8 964.1,518.9 966.7,517.9 967.9,515.7 969.2,517.3 970.2,520.5 973.6,521.1 976.1,521.5 978.0,519.8 979.3,517.9 979.9,521.1 981.8,523.6 984.4,525.5 986.9,528.7 987.9,532.5 987.1,536.9 985.0,540.7 982.5,542.6 978.0,542.6 976.8,539.4 975.5,536.9 971.7,535.6 967.9,534.6 964.1,534.4 959.7,535.6 955.9,536.9 952.1,538.2 950.9,534.4 950.0,529.9" fill="#ee6b77"/>
<polygon points="975.8,505.3 977.4,505.9 977.4,508.4" fill="#ee6b77" stroke="#ee6b77" stroke-width="0.7" stroke-linejoin="round"/>
</g>
</g>
<rect x="328" y="775" width="713" height="15" fill="#f1f1f1" />
<rect x="345" y="777" width="605" height="13" fill="#c1c1c1" />
<path d="M338 779.5 v8 l-4.2 -4 z" fill="#a3a3a3"/>
<path d="M1031 779.6 v7.8 l4.4 -3.9 z" fill="#383838"/>
<text x="1063" y="166.5" font-size="11" fill="#2b8ccf" >1</text>
<text x="1062.5" y="268" font-size="11" fill="#111" >2</text>
<rect x="1076" y="158" width="164" height="92" fill="#fff" />
<clipPath id="t1c"><rect x="1077" y="159" width="162" height="90"/></clipPath>
<g clip-path="url(#t1c)" opacity="0.9"><g transform="translate(1001.85 138.58) scale(0.228 0.14)">
<text x="685.5" y="197.4" font-size="32" fill="#636363" text-anchor="middle" font-weight="bold" >World Development Indicators Dashboard</text>
<rect x="338.5" y="231.5" width="292" height="236" fill="#fff" stroke="#c2c2c2" stroke-width="1" />
<text x="347.3" y="247.7" font-size="13.33" fill="#5e5e5e" font-weight="bold" >World Inflation, GDP deflator (annual %)</text>
<rect x="341" y="255" width="287" height="1" fill="url(#ulg)"/>
<rect x="397" y="275" width="218" height="1" fill="#dcdcdc" />
<rect x="397" y="294" width="218" height="1" fill="#dcdcdc" />
<rect x="397" y="313" width="218" height="1" fill="#dcdcdc" />
<rect x="397" y="331" width="218" height="1" fill="#dcdcdc" />
<rect x="397" y="350" width="218" height="1" fill="#dcdcdc" />
<rect x="397" y="369" width="218" height="1" fill="#dcdcdc" />
<rect x="397" y="386" width="218" height="1" fill="#dcdcdc" />
<rect x="418" y="275" width="1" height="111" fill="#dcdcdc" />
<rect x="461" y="275" width="1" height="111" fill="#dcdcdc" />
<rect x="505" y="275" width="1" height="111" fill="#dcdcdc" />
<rect x="548" y="275" width="1" height="111" fill="#dcdcdc" />
<rect x="592" y="275" width="1" height="111" fill="#dcdcdc" />
<text x="385.5" y="279" font-size="10.5" fill="#858585" text-anchor="end" class="t" >8.00</text>
<text x="385.5" y="298" font-size="10.5" fill="#858585" text-anchor="end" class="t" >7.00</text>
<text x="385.5" y="317" font-size="10.5" fill="#858585" text-anchor="end" class="t" >6.00</text>
<text x="385.5" y="335" font-size="10.5" fill="#858585" text-anchor="end" class="t" >5.00</text>
<text x="385.5" y="354" font-size="10.5" fill="#858585" text-anchor="end" class="t" >4.00</text>
<text x="385.5" y="373" font-size="10.5" fill="#858585" text-anchor="end" class="t" >3.00</text>
<text x="385.5" y="390" font-size="10.5" fill="#858585" text-anchor="end" class="t" >2.00</text>
<polyline points="418.5,325 461.5,283.5 505.5,383.5 548.5,345 592.5,324.5" fill="none" stroke="#4a9fd0" stroke-width="2" stroke-linejoin="round"/>
<circle cx="418.5" cy="325" r="2.8" fill="#fff" stroke="#4a9fd0" stroke-width="1"/>
<circle cx="461.5" cy="283.5" r="2.8" fill="#fff" stroke="#4a9fd0" stroke-width="1"/>
<circle cx="505.5" cy="383.5" r="2.8" fill="#fff" stroke="#4a9fd0" stroke-width="1"/>
<circle cx="548.5" cy="345" r="2.8" fill="#fff" stroke="#4a9fd0" stroke-width="1"/>
<circle cx="592.5" cy="324.5" r="2.8" fill="#fff" stroke="#4a9fd0" stroke-width="1"/>
<text x="418.5" y="410" font-size="10.5" fill="#858585" text-anchor="middle" class="t" >2007</text>
<text x="461.5" y="410" font-size="10.5" fill="#858585" text-anchor="middle" class="t" >2008</text>
<text x="505.5" y="410" font-size="10.5" fill="#858585" text-anchor="middle" class="t" >2009</text>
<text x="548.5" y="410" font-size="10.5" fill="#858585" text-anchor="middle" class="t" >2010</text>
<text x="592.5" y="410" font-size="10.5" fill="#858585" text-anchor="middle" class="t" >2011</text>
<rect x="457" y="444" width="16" height="2" fill="#4a9fd0" />
<circle cx="465" cy="445" r="3.4" fill="#fff" stroke="#4a9fd0" stroke-width="1.2"/>
<text x="481.5" y="450" font-size="10.5" fill="#858585" class="t" >World</text>
<rect x="338.5" y="478.5" width="292" height="286" fill="#fff" stroke="#c2c2c2" stroke-width="1" />
<text x="347.3" y="494.7" font-size="13.33" fill="#5e5e5e" font-weight="bold" >World Communication statistics</text>
<rect x="341" y="502" width="287" height="1" fill="url(#ulg)"/>
<rect x="452" y="523" width="163" height="1" fill="#dcdcdc" />
<rect x="452" y="539" width="163" height="1" fill="#dcdcdc" />
<rect x="452" y="555" width="163" height="1" fill="#dcdcdc" />
<rect x="452" y="571" width="163" height="1" fill="#dcdcdc" />
<rect x="452" y="587" width="163" height="1" fill="#dcdcdc" />
<rect x="452" y="603" width="163" height="1" fill="#dcdcdc" />
<rect x="452" y="619" width="163" height="1" fill="#dcdcdc" />
<rect x="452" y="636" width="163" height="1" fill="#dcdcdc" />
<rect x="452" y="652" width="163" height="1" fill="#dcdcdc" />
<rect x="452" y="668" width="163" height="1" fill="#dcdcdc" />
<rect x="452" y="683" width="163" height="1" fill="#dcdcdc" />
<rect x="467" y="521" width="1" height="162" fill="#dcdcdc" />
<rect x="500" y="521" width="1" height="162" fill="#dcdcdc" />
<rect x="532" y="521" width="1" height="162" fill="#dcdcdc" />
<rect x="565" y="521" width="1" height="162" fill="#dcdcdc" />
<rect x="598" y="521" width="1" height="162" fill="#dcdcdc" />
<text x="444" y="527" font-size="10.5" fill="#858585" text-anchor="end" class="t" >2,200,000,000.00</text>
<text x="444" y="543" font-size="10.5" fill="#858585" text-anchor="end" class="t" >2,000,000,000.00</text>
<text x="444" y="559" font-size="10.5" fill="#858585" text-anchor="end" class="t" >1,800,000,000.00</text>
<text x="444" y="575" font-size="10.5" fill="#858585" text-anchor="end" class="t" >1,600,000,000.00</text>
<text x="444" y="591" font-size="10.5" fill="#858585" text-anchor="end" class="t" >1,400,000,000.00</text>
<text x="444" y="607" font-size="10.5" fill="#858585" text-anchor="end" class="t" >1,200,000,000.00</text>
<text x="444" y="623" font-size="10.5" fill="#858585" text-anchor="end" class="t" >1,000,000,000.00</text>
<text x="444" y="640" font-size="10.5" fill="#858585" text-anchor="end" class="t" >800,000,000.00</text>
<text x="444" y="656" font-size="10.5" fill="#858585" text-anchor="end" class="t" >600,000,000.00</text>
<text x="444" y="672" font-size="10.5" fill="#858585" text-anchor="end" class="t" >400,000,000.00</text>
<text x="444" y="687" font-size="10.5" fill="#858585" text-anchor="end" class="t" >200,000,000.00</text>
<rect x="456.5" y="673" width="7.4" height="10" fill="#52a3d0" />
<rect x="463" y="673" width="0.9" height="10" fill="#3f8fbd" />
<rect x="463.5" y="596" width="7.4" height="87" fill="#57c27e" />
<rect x="470.5" y="596" width="0.9" height="87" fill="#43ad6a" />
<rect x="471" y="604" width="7.4" height="79" fill="#e5c347" />
<rect x="477.5" y="604" width="0.9" height="79" fill="#d2a830" />
<rect x="489" y="668" width="7.4" height="15" fill="#52a3d0" />
<rect x="495.5" y="668" width="0.9" height="15" fill="#3f8fbd" />
<rect x="496.5" y="581" width="7.4" height="102" fill="#57c27e" />
<rect x="503" y="581" width="0.9" height="102" fill="#43ad6a" />
<rect x="503.5" y="604" width="7.4" height="79" fill="#e5c347" />
<rect x="510.5" y="604" width="0.9" height="79" fill="#d2a830" />
<rect x="521.5" y="664" width="7.4" height="19" fill="#52a3d0" />
<rect x="528" y="664" width="0.9" height="19" fill="#3f8fbd" />
<rect x="529" y="566" width="7.4" height="117" fill="#57c27e" />
<rect x="535.5" y="566" width="0.9" height="117" fill="#43ad6a" />
<rect x="536" y="604" width="7.4" height="79" fill="#e5c347" />
<rect x="542.5" y="604" width="0.9" height="79" fill="#d2a830" />
<rect x="554.5" y="660" width="7.4" height="23" fill="#52a3d0" />
<rect x="561" y="660" width="0.9" height="23" fill="#3f8fbd" />
<rect x="561.5" y="546" width="7.4" height="137" fill="#57c27e" />
<rect x="568" y="546" width="0.9" height="137" fill="#43ad6a" />
<rect x="569" y="606" width="7.4" height="77" fill="#e5c347" />
<rect x="575.5" y="606" width="0.9" height="77" fill="#d2a830" />
<rect x="586.5" y="655" width="7.4" height="28" fill="#52a3d0" />
<rect x="593.5" y="655" width="0.9" height="28" fill="#3f8fbd" />
<rect x="594" y="527" width="7.4" height="156" fill="#57c27e" />
<rect x="600.5" y="527" width="0.9" height="156" fill="#43ad6a" />
<rect x="601.5" y="608" width="7.4" height="75" fill="#e5c347" />
<rect x="608" y="608" width="0.9" height="75" fill="#d2a830" />
<text x="467" y="707" font-size="10.5" fill="#858585" text-anchor="middle" class="t" >2007</text>
<text x="532.5" y="707" font-size="10.5" fill="#858585" text-anchor="middle" class="t" >2009</text>
<text x="598" y="707" font-size="10.5" fill="#858585" text-anchor="middle" class="t" >2011</text>
<rect x="345" y="734" width="16" height="16" fill="#52a3d0" />
<text x="369.3" y="747" font-size="10.5" fill="#858585" class="t" >Fixed broad...</text>
<rect x="439" y="734" width="16" height="16" fill="#57c27e" />
<text x="463.3" y="747" font-size="10.5" fill="#858585" class="t" >Internet us...</text>
<rect x="533" y="734" width="16" height="16" fill="#e5c347" />
<text x="557.3" y="747" font-size="10.5" fill="#858585" class="t" >Telephone l...</text>
<rect x="641.5" y="231.5" width="390" height="533" fill="#fff" stroke="#c2c2c2" stroke-width="1" />
<text x="650.3" y="247.7" font-size="13.33" fill="#5e5e5e" font-weight="bold" >GNI, constant LCU</text>
<rect x="644" y="255" width="385" height="1" fill="url(#ulg)"/>
<text x="835.5" y="662" font-size="12" fill="#858585" text-anchor="middle" class="t" >Color: GNI. constant LCU</text>
<circle cx="669.2" cy="681.3" r="7.4" fill="#ee6b77"/>
<text x="680.8" y="686.3" font-size="11.5" fill="#858585" class="t" >less than 75257650000000</text>
<circle cx="837.5" cy="681.3" r="7.4" fill="#9ade4a"/>
<text x="849" y="686.3" font-size="11.5" fill="#858585" class="t" >greater than 75257650000000</text>
<circle cx="669.2" cy="702.4" r="7.4" fill="#e8e8e8"/>
<text x="680.8" y="707.3" font-size="11.5" fill="#858585" class="t" >No data</text>
<ellipse cx="665.5" cy="744" rx="13.5" ry="13" fill="url(#pbs)" clip-path="url(#pbc)"/>
<circle cx="666" cy="742" r="9.8" fill="#fff" stroke="#ebebeb"/>
<path d="M663 738 l8.2 3.8 l-8.2 3.8 z" fill="#9a9a9a"/>
<rect x="683.5" y="731.5" width="340" height="23" fill="#fff" stroke="#d8d8d8" stroke-width="1" rx="2" />
<rect x="750" y="732" width="1" height="22" fill="#dcdcdc" />
<rect x="818" y="732" width="1" height="22" fill="#dcdcdc" />
<rect x="886" y="732" width="1" height="22" fill="#dcdcdc" />
<rect x="955" y="732" width="1" height="22" fill="#dcdcdc" />
<rect x="955.5" y="732.5" width="67" height="21" fill="#d5eaf8" stroke="#2b8ccf" stroke-width="1" rx="2" />
<text x="717.2" y="747" font-size="10.5" fill="#333" text-anchor="middle" class="t" >2007</text>
<text x="784.9" y="747" font-size="10.5" fill="#333" text-anchor="middle" class="t" >2008</text>
<text x="852.9" y="747" font-size="10.5" fill="#333" text-anchor="middle" class="t" >2009</text>
<text x="921.05" y="747" font-size="10.5" fill="#333" text-anchor="middle" class="t" >2010</text>
<text x="989.35" y="747" font-size="10.5" fill="#333" text-anchor="middle" class="t" >2011</text>
<g>
<polygon points="784.4,331.4 795.8,330.1 797.1,333.3 792.0,335.2 789.5,340.2 790.7,343.4 793.9,340.2 797.7,340.9 799.6,343.4 801.5,347.2 805.9,344.0 811.0,341.5 808.4,344.7 804.0,348.4 802.1,352.9 801.5,359.2 800.9,365.5 800.6,371.8 799.6,378.2 797.7,380.7 795.8,384.5 794.5,390.8 793.9,395.9 791.4,396.5 788.2,399.0 786.9,402.2 783.2,403.4 780.6,407.2 779.4,412.3 776.8,415.7 774.9,413.6 773.7,409.8 771.5,406.0 771.5,402.8 773.7,399.6 774.3,394.6 773.7,390.8 770.5,387.0 768.6,381.9 768.0,377.5 765.5,373.1 762.9,370.6 759.1,368.7 755.3,368.0 758.1,363.6 756.0,362.4 751.8,360.7 754.1,358.6 757.2,357.9 758.5,352.9 759.1,347.2 762.3,342.8 765.5,342.1 765.7,337.7 766.7,341.5 769.2,340.9 773.7,339.0 776.8,340.2 780.6,335.8 783.8,334.5" fill="#ee6b77"/>
<polygon points="741.4,334.5 745.2,333.3 750.3,333.9 756.6,332.6 757.9,334.5 754.7,337.1 750.9,338.3 749.0,342.8 749.7,345.3 745.9,348.4 741.4,351.6 739.9,350.3 744.0,347.2 745.9,343.4 747.1,339.0 744.0,339.0 741.4,336.4" fill="#ee6b77" stroke="#ee6b77" stroke-width="0.7" stroke-linejoin="round"/>
<polygon points="733.2,339.6 737.6,338.3 741.4,339.6 740.2,341.5 736.4,340.9" fill="#ee6b77" stroke="#ee6b77" stroke-width="0.7" stroke-linejoin="round"/>
<polygon points="725.6,346.5 728.2,348.4 730.1,352.2 727.5,352.2 726.0,349.7" fill="#ee6b77" stroke="#ee6b77" stroke-width="0.7" stroke-linejoin="round"/>
<polygon points="739.9,357.9 741.4,358.6 740.8,361.7 739.2,363.0" fill="#ee6b77" stroke="#ee6b77" stroke-width="0.7" stroke-linejoin="round"/>
<polygon points="737.0,388.3 743.3,387.6 744.0,390.2 747.8,392.7 750.3,397.1 753.4,401.5 751.5,402.8 751.8,409.1 749.7,409.8 748.8,406.0 749.7,402.2 747.8,397.1 745.2,393.3 742.7,390.8 737.6,391.4" fill="#ee6b77" stroke="#ee6b77" stroke-width="0.7" stroke-linejoin="round"/>
<polygon points="694.2,380.6 697.4,381.2 695.4,387.6 693.5,386.9" fill="#ee6b77" stroke="#ee6b77" stroke-width="0.7" stroke-linejoin="round"/>
<polygon points="705.0,388.2 708.2,388.9 711.4,390.8 714.0,392.7 713.3,394.6 710.1,394.0 707.6,396.3 706.3,394.6 707.6,391.4" fill="#ee6b77" stroke="#ee6b77" stroke-width="0.7" stroke-linejoin="round"/>
<polygon points="734.7,400.6 735.9,400.6 735.9,401.6 734.7,401.6" fill="#ee6b77" stroke="#ee6b77" stroke-width="0.7" stroke-linejoin="round"/>
<polygon points="651.1,398.7 656.4,394.4 661.7,394.1 667.8,395.6 675.3,397.1 681.4,400.2 686.7,397.4 692.0,397.1 697.4,398.4 701.1,401.7 707.2,403.2 711.8,404.7 714.8,402.5 720.9,403.2 725.4,404.0 726.9,400.2 729.2,400.5 730.0,404.0 727.7,406.2 725.4,409.3 723.9,413.8 722.7,418.4 723.1,422.9 725.4,427.5 729.2,428.2 733.0,430.5 736.0,434.3 737.6,438.9 742.1,438.1 744.4,433.6 745.9,429.0 746.4,423.7 745.2,417.6 747.0,416.9 748.9,421.4 750.5,425.2 755.8,425.2 758.1,429.8 761.1,434.3 757.3,436.6 753.5,438.1 751.2,441.9 753.5,443.4 751.2,445.7 748.2,448.0 745.9,451.0 742.1,453.3 740.6,456.3 741.4,460.1 738.3,463.1 736.0,464.7 733.8,463.1 731.5,463.9 726.9,465.4 722.4,467.7 720.1,471.5 720.1,476.0 720.9,480.3 717.8,479.1 715.6,475.3 711.8,470.7 708.7,466.9 705.7,463.1 701.9,460.1 698.1,457.8 695.8,454.0 695.4,448.7 696.6,443.4 695.8,438.9 692.8,435.1 689.8,431.3 688.2,426.7 685.2,422.9 681.4,419.1 675.3,416.9 670.8,416.1 667.8,413.8 663.2,413.1 660.2,416.1 658.7,419.1 654.9,419.1 655.6,416.1 651.8,415.3 654.9,412.3 655.6,407.8 654.1,403.2" fill="#ee6b77"/>
<polygon points="745.7,492.2 747.6,491.6 748.3,492.9 751.4,491.6 755.2,491.2 758.4,492.9 761.5,494.8 764.7,496.0 768.5,496.0 769.8,498.5 769.1,503.0 771.7,504.9 774.2,504.9 775.5,503.9 778.6,505.5 783.0,506.1 786.8,508.4 784.9,511.2 783.0,514.4 782.0,518.1 781.5,521.9 779.2,524.1 775.5,525.7 772.7,528.3 771.7,532.7 769.1,535.2 766.6,538.4 763.4,537.7 760.9,539.0 762.6,541.5 762.2,543.8 758.4,544.1 756.5,546.6 754.6,547.9 753.7,551.6 752.1,555.4 751.4,557.3 753.0,559.2 750.2,559.2 751.2,560.5 749.9,563.7 748.7,563.0 749.2,560.5 749.2,558.0 750.2,554.2 749.9,550.4 748.9,546.6 749.5,543.4 750.8,539.0 751.4,533.9 752.1,528.9 752.7,523.8 752.7,520.0 750.8,518.1 747.6,516.2 745.7,513.7 743.8,509.9 741.3,506.1 742.0,501.7 743.8,499.2 745.4,496.0" fill="#9ade4a"/>
<polygon points="817.7,464.7 822.1,462.1 827.2,460.9 831.6,460.0 834.8,460.2 836.0,463.4 839.2,464.7 843.0,465.9 846.8,468.4 849.9,466.5 854.4,467.2 858.8,467.8 860.7,471.0 862.6,474.8 864.5,479.2 866.4,483.6 868.9,486.8 869.5,490.6 872.7,491.2 877.4,490.6 875.9,493.7 873.3,496.9 870.2,500.1 867.6,502.6 865.7,506.4 865.7,510.8 867.0,514.0 866.4,517.1 863.2,519.0 861.3,522.2 860.7,526.6 858.8,529.8 856.3,532.9 853.1,536.1 849.9,538.0 847.8,538.0 846.1,533.6 844.2,529.1 843.0,524.7 840.5,520.9 840.7,516.5 842.4,514.0 841.7,510.2 840.5,505.7 838.6,501.9 837.3,496.9 836.0,492.5 833.5,493.1 830.3,491.8 825.3,492.5 819.0,493.7 815.2,491.2 812.6,488.0 810.4,484.2 810.1,479.2 811.4,474.8 813.9,471.6 816.4,469.1" fill="#9ade4a"/>
<polygon points="858.2,501.9 861.9,499.4 863.0,501.3 861.3,503.2 859.4,503.8" fill="#fff"/>
<polygon points="856.3,505.7 858.8,505.1 860.1,508.9 857.5,509.5" fill="#fff"/>
<polygon points="861.7,512.1 864.5,511.4 864.7,515.9 861.9,515.9" fill="#fff"/>
<polygon points="875.6,520.3 876.7,519.9 875.9,524.1 874.6,526.6 874.3,524.7" fill="#9ade4a" stroke="#9ade4a" stroke-width="0.7" stroke-linejoin="round"/>
<polygon points="848.0,397.8 851.8,395.9 855.0,395.2 856.3,397.8 859.4,398.4 863.2,399.7 867.6,402.2 865.7,403.4 861.9,401.5 858.8,401.5 859.4,404.7 861.3,408.5 863.8,411.0 867.0,412.7 870.8,410.4 874.6,407.2 878.4,404.1 882.2,401.5 887.2,400.9 891.0,399.7 894.2,397.8 897.1,400.3 894.8,404.1 892.9,407.9 891.0,412.3 890.0,418.0 889.8,423.7 889.1,429.4 887.9,434.4 887.2,438.8 884.1,441.4 879.6,442.6 875.9,443.9 874.0,447.7 870.8,447.1 868.9,443.3 867.0,441.4 863.2,442.6 859.4,443.3 855.6,445.8 853.1,449.6 849.3,451.5 846.1,449.0 843.6,445.8 840.5,443.9 836.7,445.2 832.2,447.1 828.4,447.7 826.5,450.9 824.0,452.7 823.4,455.3 820.9,455.9 818.3,452.7 819.0,450.9 822.8,450.9 825.9,449.0 827.2,443.9 829.7,440.7 832.9,438.2 836.0,434.4 840.5,433.4 845.5,433.2 849.9,430.6 852.5,428.1 854.4,423.7 858.8,422.4 860.7,419.2 858.2,417.4 855.0,418.0 851.8,417.4 851.2,413.6 853.7,410.4 855.0,406.6 852.5,404.1 849.3,405.3 846.8,408.5 844.9,412.3 843.6,416.7 842.4,421.1 841.7,424.9 840.2,423.0 839.8,419.2 837.3,417.4 836.0,415.5 838.6,412.3 841.1,408.5 842.4,404.7 844.9,401.5" fill="#ee6b77"/>
<polygon points="804.4,408.5 808.2,407.9 805.7,409.8" fill="#ee6b77" stroke="#ee6b77" stroke-width="0.7" stroke-linejoin="round"/>
<polygon points="892.1,429.6 893.0,423.3 893.4,416.9 894.0,410.6 895.9,406.8 898.4,404.9 901.6,406.2 905.4,404.3 908.6,402.4 912.4,401.1 911.7,398.0 909.2,395.5 907.3,392.9 910.5,392.3 912.4,389.8 913.6,392.9 915.5,395.5 917.0,392.9 916.8,388.5 914.2,384.7 917.4,382.8 919.9,382.2 920.6,378.4 923.1,375.9 927.5,374.6 931.9,374.0 934.5,372.1 936.4,368.9 938.9,371.4 943.3,370.8 944.8,374.6 942.1,377.1 938.9,380.3 935.7,383.4 935.1,388.5 938.9,386.6 944.0,384.7 949.6,384.1 953.4,386.0 957.9,386.0 961.0,384.1 962.8,388.5 964.7,392.3 967.8,394.2 969.1,391.7 973.5,391.9 977.3,389.8 979.2,387.2 983.6,388.5 985.5,391.7 989.9,392.9 994.4,392.9 996.3,396.7 1000.7,397.7 1004.5,398.0 1008.9,399.5 1012.1,397.0 1015.9,397.4 1019.0,400.5 1021.9,403.3 1019.0,403.7 1016.5,406.8 1014.0,408.7 1013.3,411.9 1010.2,415.1 1008.3,416.7 1004.5,416.9 1003.2,414.4 1002.6,412.5 999.4,413.8 995.6,414.4 991.8,416.9 988.7,418.8 984.2,419.5 979.2,420.1 975.4,423.3 971.6,427.1 968.4,430.9 971.0,434.0 974.8,434.6 974.1,439.1 971.6,443.5 969.7,447.3 965.9,448.6 962.8,451.7 959.0,452.3 955.2,453.0 951.4,455.0 956.1,451.5 952.9,452.8 950.4,455.3 951.3,459.7 952.9,463.5 952.3,467.9 951.0,471.7 947.2,474.2 942.2,476.1 938.4,477.4 936.9,479.9 939.0,483.1 940.7,486.3 938.4,486.9 935.2,484.4 932.1,481.8 928.9,478.7 925.7,475.5 922.6,473.6 919.4,474.9 915.6,478.7 911.8,481.8 909.9,484.4 908.7,487.5 907.4,484.4 905.8,479.9 904.9,475.5 901.7,473.0 897.9,471.1 892.9,470.7 888.4,469.8 884.7,468.6 880.9,466.0 877.7,464.8 875.4,466.7 877.1,470.5 879.0,474.2 882.1,476.1 886.5,476.5 884.7,478.7 880.9,480.6 877.1,482.5 873.9,483.7 872.0,480.6 869.5,476.1 867.0,471.7 865.1,467.3 865.7,462.9 867.0,458.4 865.1,456.5 861.3,455.3 861.9,456.4 857.5,455.8 861.9,453.7 867.0,453.9 870.8,452.6 874.0,452.0 872.6,452.8 875.8,454.7 877.1,459.1 880.9,460.3 884.7,460.3 885.9,457.2 886.5,452.8 884.7,449.0 886.5,448.3 887.2,443.9 889.7,440.1 891.0,435.1" fill="#9ade4a"/>
<polygon points="900.1,389.4 901.4,386.0 901.9,392.9 901.6,399.2 900.7,396.7" fill="#9ade4a" stroke="#9ade4a" stroke-width="0.7" stroke-linejoin="round"/>
<polygon points="995.6,425.8 997.9,425.2 996.9,429.0 995.0,432.1 994.1,430.2" fill="#9ade4a" stroke="#9ade4a" stroke-width="0.7" stroke-linejoin="round"/>
<polygon points="946.0,500.8 949.1,498.0 950.0,499.5 947.9,501.8" fill="#9ade4a" stroke="#9ade4a" stroke-width="0.7" stroke-linejoin="round"/>
<polygon points="875.2,520.4 876.4,520.0 875.4,524.2 874.2,526.1" fill="#9ade4a" stroke="#9ade4a" stroke-width="0.7" stroke-linejoin="round"/>
<polygon points="949.6,526.1 953.4,524.2 957.2,523.0 960.3,519.8 964.1,518.9 966.7,517.9 967.9,515.7 969.2,517.3 970.2,520.5 973.6,521.1 976.1,521.5 978.0,519.8 979.3,517.9 979.9,521.1 981.8,523.6 984.4,525.5 986.9,528.7 987.9,532.5 987.1,536.9 985.0,540.7 982.5,542.6 978.0,542.6 976.8,539.4 975.5,536.9 971.7,535.6 967.9,534.6 964.1,534.4 959.7,535.6 955.9,536.9 952.1,538.2 950.9,534.4 950.0,529.9" fill="#ee6b77"/>
<polygon points="975.8,505.3 977.4,505.9 977.4,508.4" fill="#ee6b77" stroke="#ee6b77" stroke-width="0.7" stroke-linejoin="round"/>
</g>
</g></g>
<rect x="1220" y="241" width="14.5" height="2.8" fill="#2b8ccf" />
<rect x="1078.5" y="159.5" width="160" height="87" fill="none" stroke="#e0e0e0" stroke-width="1" />
<rect x="1075.5" y="157.5" width="165" height="93" fill="none" stroke="#2b8ccf" stroke-width="1" />
<rect x="1075.5" y="258.5" width="165" height="93" fill="#fff" stroke="#dcdcdc" stroke-width="1" />
<rect x="1078.5" y="261.5" width="159" height="10" fill="#fff" stroke="#ececec" stroke-width="1" />
<text x="1157.7" y="267.8" font-size="3.72" fill="#555" text-anchor="middle" font-weight="bold" >World Development Indicators Dashboard</text>
<rect x="1079.5" y="272.5" width="100" height="35" fill="#fff" stroke="#e4e4e4" stroke-width="1" />
<circle cx="1129.4" cy="289.1" r="12.4" fill="#a9d3ec"/>
<path d="M1129.4 289.1 L1121.2 279.8 A12.4 12.4 0 0 1 1129.4 276.7 Z" fill="#a5dcc4"/>
<rect x="1098" y="303" width="2" height="1.6" fill="#2b8ccf" />
<rect x="1101" y="303.4" width="2" height="0.8" fill="#d8d8d8" />
<rect x="1104" y="303" width="2" height="1.6" fill="#57c27e" />
<rect x="1107" y="303.4" width="3" height="0.8" fill="#d8d8d8" />
<rect x="1111" y="303" width="2" height="1.6" fill="#e5c347" />
<rect x="1114" y="303.4" width="2" height="0.8" fill="#d8d8d8" />
<rect x="1117" y="303" width="2" height="1.6" fill="#f04b3c" />
<rect x="1120" y="303.4" width="11" height="0.8" fill="#d8d8d8" />
<rect x="1131" y="303" width="2" height="1.6" fill="#2b8ccf" />
<rect x="1134" y="303.4" width="3" height="0.8" fill="#d8d8d8" />
<rect x="1138" y="303" width="2" height="1.6" fill="#57c27e" />
<rect x="1141" y="303.4" width="8" height="0.8" fill="#d8d8d8" />
<rect x="1150" y="303" width="2" height="1.6" fill="#e0861a" />
<rect x="1153" y="303.4" width="10" height="0.8" fill="#d8d8d8" />
<rect x="1079.5" y="307.5" width="100" height="41" fill="#fff" stroke="#b0b0b0" stroke-width="1" />
<rect x="1080" y="307" width="99" height="1" fill="#e4e4e4" />
<rect x="1080" y="310.3" width="31" height="5.4" fill="#ececec" />
<rect x="1111.5" y="310.3" width="62" height="5.4" fill="#e2e2e2" />
<rect x="1111.5" y="310.3" width="12" height="5.4" fill="#d0d0d0" />
<rect x="1111" y="310" width="1" height="15" fill="#555" />
<rect x="1080" y="316.6" width="31" height="2.2" fill="#e8e8e8" />
<rect x="1081" y="317.2" width="25" height="0.9" fill="#555" />
<rect x="1113.5" y="317.3" width="8.5" height="0.8" fill="#888" />
<rect x="1125.9" y="317.3" width="8.5" height="0.8" fill="#888" />
<rect x="1138.3" y="317.3" width="8.5" height="0.8" fill="#888" />
<rect x="1150.7" y="317.3" width="8.5" height="0.8" fill="#888" />
<rect x="1163.1" y="317.3" width="8.5" height="0.8" fill="#888" />
<rect x="1080" y="319.6" width="31" height="2.2" fill="#e8e8e8" />
<rect x="1081" y="320.2" width="25" height="0.9" fill="#555" />
<rect x="1113.5" y="320.3" width="8.5" height="0.8" fill="#888" />
<rect x="1125.9" y="320.3" width="8.5" height="0.8" fill="#888" />
<rect x="1138.3" y="320.3" width="8.5" height="0.8" fill="#888" />
<rect x="1150.7" y="320.3" width="8.5" height="0.8" fill="#888" />
<rect x="1163.1" y="320.3" width="8.5" height="0.8" fill="#888" />
<rect x="1080" y="322.6" width="31" height="2.2" fill="#e8e8e8" />
<rect x="1081" y="323.2" width="25" height="0.9" fill="#555" />
<rect x="1113.5" y="323.3" width="8.5" height="0.8" fill="#888" />
<rect x="1125.9" y="323.3" width="8.5" height="0.8" fill="#888" />
<rect x="1138.3" y="323.3" width="8.5" height="0.8" fill="#888" />
<rect x="1150.7" y="323.3" width="8.5" height="0.8" fill="#888" />
<rect x="1163.1" y="323.3" width="8.5" height="0.8" fill="#888" />
<rect x="1116" y="311.6" width="3" height="0.8" fill="#777" />
<rect x="1128.4" y="311.6" width="3" height="0.8" fill="#777" />
<rect x="1140.8" y="311.6" width="3" height="0.8" fill="#777" />
<rect x="1153.2" y="311.6" width="3" height="0.8" fill="#777" />
<rect x="1165.6" y="311.6" width="3" height="0.8" fill="#777" />
<rect x="1181.5" y="272.5" width="55" height="76" fill="#fff" stroke="#e4e4e4" stroke-width="1" />
<rect x="1181" y="276" width="55.5" height="5" fill="#a8a8a8" />
<rect x="1181" y="281" width="46.2" height="33" fill="#6a8530" />
<rect x="1227.4" y="281" width="9.1" height="19.6" fill="#6a8530" />
<rect x="1227.4" y="300.8" width="4.5" height="6.4" fill="#c3d23e" />
<rect x="1231.9" y="300.8" width="4.6" height="6.4" fill="#e8a93c" />
<rect x="1227.4" y="307.4" width="4.5" height="6.6" fill="#eba53a" />
<rect x="1231.9" y="307.4" width="4.6" height="6.6" fill="#f0452a" />
<text x="1204" y="303.2" font-size="14.3" fill="#fff" text-anchor="middle" class="t" >Asia</text>
<text x="1232" y="293" font-size="3.5" fill="#fff" text-anchor="middle" class="t" >Afr</text>
<rect x="1201" y="315.4" width="14" height="0.8" fill="#d0d0d0" />
<rect x="1194" y="321.6" width="30" height="0.7" fill="#c4c4c4" />
<rect x="1199" y="319.5" width="3" height="1" fill="#bbb" />
<rect x="1214" y="319.5" width="3" height="1.4" fill="#999" />
<rect x="1200" y="325.8" width="17" height="0.7" fill="#d4d4d4" />
<rect x="1189" y="328.6" width="2.2" height="1.8" fill="#ee6b77" />
<rect x="1192" y="329.1" width="23" height="0.8" fill="#b8b8b8" />
<rect x="1189" y="331" width="2.2" height="1.8" fill="#f0c040" />
<rect x="1192" y="331.5" width="36" height="0.8" fill="#b8b8b8" />
<rect x="1189" y="333.4" width="2.2" height="1.8" fill="#f0d040" />
<rect x="1192" y="333.9" width="36" height="0.8" fill="#b8b8b8" />
<rect x="1189" y="335.8" width="2.2" height="1.8" fill="#c8dc50" />
<rect x="1192" y="336.3" width="37" height="0.8" fill="#b8b8b8" />
<rect x="1189" y="338.2" width="2.2" height="1.8" fill="#88b838" />
<rect x="1192" y="338.7" width="25" height="0.8" fill="#b8b8b8" />
<rect x="1190" y="340.6" width="8" height="0.7" fill="#d0d0d0" />
<circle cx="1184" cy="345.3" r="1.4" fill="#fff" stroke="#c0c0c0" stroke-width="0.4"/>
<rect x="1187" y="344.6" width="39" height="1.8" fill="#f0f0f0" />
<rect x="1226" y="344.6" width="9.4" height="1.9" fill="#2b8ccf" />
<rect x="0.5" y="0.5" width="1252" height="790" fill="none" stroke="#4d4d4d" stroke-width="1" />
</svg>
</body></html>
